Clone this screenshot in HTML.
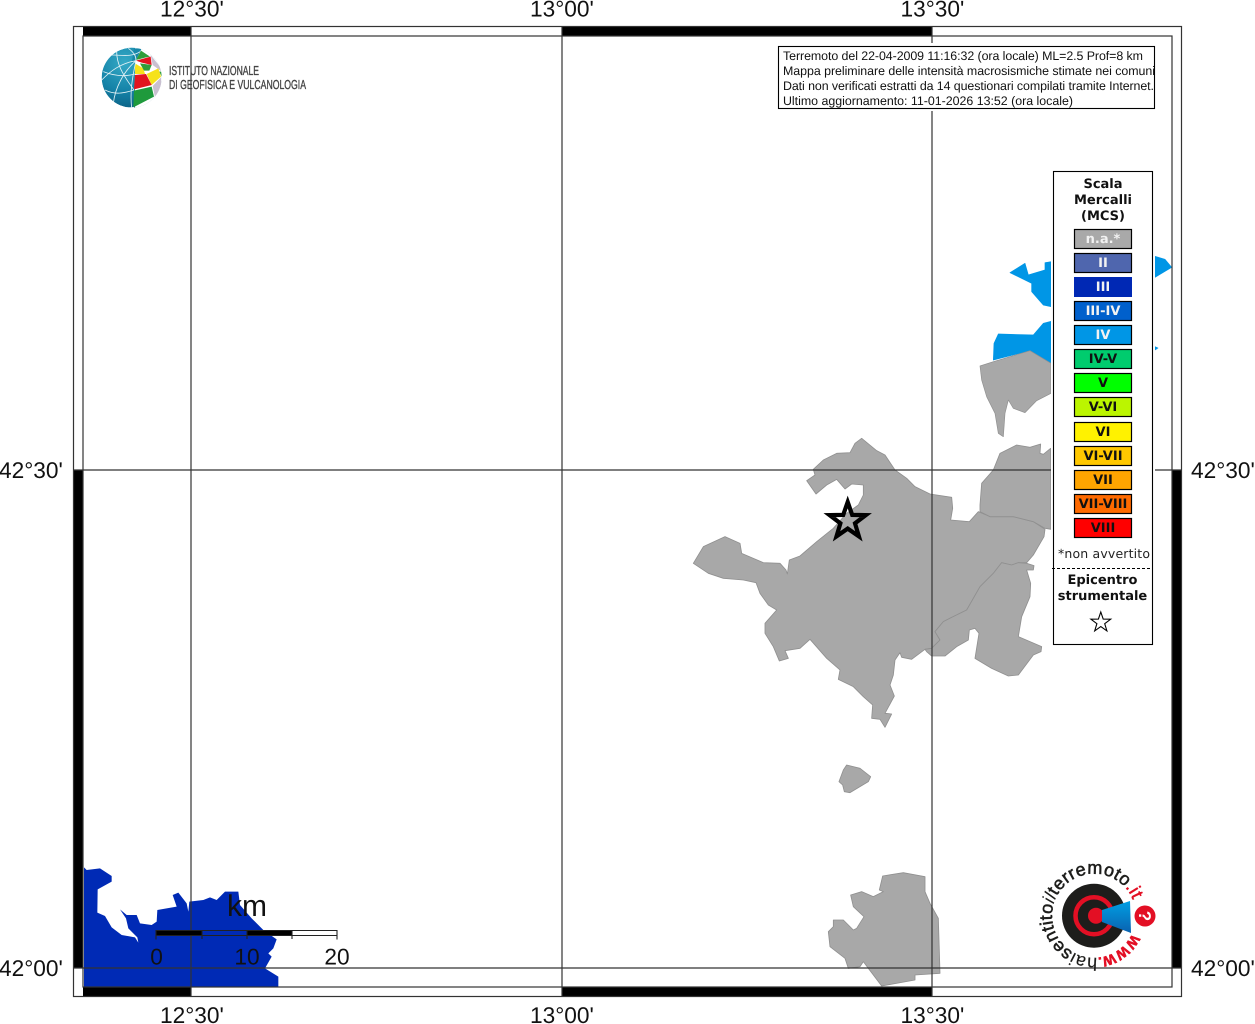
<!DOCTYPE html>
<html><head><meta charset="utf-8"><style>
html,body{margin:0;padding:0;background:#fff;width:1255px;height:1024px;overflow:hidden}
svg{display:block;filter:blur(.35px)}
text{text-rendering:geometricPrecision}
.ax{font:22.7px "Liberation Sans",sans-serif;fill:#111}
.h{font:12.4px "Liberation Sans",sans-serif;fill:#111}
.l{font:bold 13px "DejaVu Sans",sans-serif;text-anchor:middle}
.w{fill:#f2f2f2}.k{fill:#111}
</style></head><body>
<svg width="1255" height="1024" viewBox="0 0 1255 1024" xmlns="http://www.w3.org/2000/svg">
<defs>
<radialGradient id="gl" cx="38%" cy="25%" r="85%"><stop offset="0" stop-color="#35aac6"/><stop offset=".55" stop-color="#1583a8"/><stop offset="1" stop-color="#0a5a7e"/></radialGradient>
<linearGradient id="cone" x1="0" y1="0" x2="0" y2="1"><stop offset="0" stop-color="#009fe3"/><stop offset="1" stop-color="#0a62b0"/></linearGradient>
<clipPath id="gc"><circle cx="215" cy="233" r="90"/></clipPath>
<path id="arc" d="M1132.1 933.5 A42 42 0 1 1 1134.6 904.8"/>
</defs>

<!-- map -->
<g fill="#a8a8a8" stroke="#909090" stroke-width="1.2" stroke-linejoin="round" transform="translate(680,420) scale(.33333)">
<polygon stroke-width="2.5" points="545,55 590,92 615,105 645,150 680,175 705,200 750,222 815,232 818,265 812,300 868,305 895,275 930,290 1000,290 1060,305 1095,328 1092,350 1060,405 1040,428 1015,428 995,435 965,428 940,460 900,500 860,570 815,592 790,605 765,635 780,660 755,685 735,688 695,718 665,712 660,698 645,720 640,765 630,795 643,828 615,880 635,882 615,922 600,898 575,895 578,855 550,830 520,800 475,778 480,750 440,715 390,658 360,685 315,692 325,715 298,723 280,680 255,640 255,610 290,570 265,555 240,520 228,488 190,480 130,475 85,460 40,430 70,380 135,350 180,370 185,400 250,428 300,430 318,450 322,462 328,420 360,408 410,365 460,325 500,280 535,255 550,225 550,195 515,192 495,207 470,178 440,195 408,222 380,182 405,165 400,148 430,120 470,100 510,98 525,70"/>
<polygon stroke-width="2.5" points="965,428 995,435 1015,428 1040,430 1062,437 1060,450 1040,450 1052,490 1050,530 1025,590 1015,650 1085,680 1083,695 1060,705 1015,765 985,768 935,745 885,715 897,640 885,625 868,630 865,660 830,680 795,708 755,708 740,695 735,688 755,685 780,660 765,635 790,605 815,592 860,570 900,500 940,460"/>
<polygon stroke-width="2.5" points="900,255 905,190 940,150 960,100 1010,75 1050,82 1082,72 1080,100 1090,103 1112,85 1113,328 1095,325 1060,305 1000,290 930,290 900,275"/>
</g>
<g transform="translate(970,160) scale(.33333)" stroke-width="2" stroke-linejoin="round">
<g fill="#0096e6" stroke="#0096e6">
<polygon points="70,600 72,550 85,522 190,525 220,490 243,484 243,610 180,572"/>
<polygon points="120,338 165,310 175,345 225,330 225,308 243,305 243,440 220,435 185,395 185,370"/>
<polygon points="555,289 585,298 605,322 555,352"/>
<polygon points="555,560 564,564 555,570"/>
</g>
<polygon fill="#a8a8a8" stroke="#909090" points="30,618 70,605 180,572 243,610 243,700 200,722 165,758 130,745 115,720 105,760 100,830 85,820 75,760 50,710 35,660"/>
</g>
<g transform="translate(810,750) scale(.33333)" fill="#a8a8a8" stroke="#909090" stroke-width="2.5" stroke-linejoin="round">
<polygon points="110,45 150,55 182,80 175,95 120,128 103,125 98,105 87,95 100,60"/>
<polygon points="218,378 280,368 345,380 345,425 360,460 385,505 390,670 315,675 315,690 215,708 175,655 160,635 150,650 115,655 105,625 60,590 55,545 70,530 70,510 100,510 130,540 140,535 162,500 130,470 122,435 155,425 190,440 220,425 208,420"/>
</g>
<g transform="translate(60,850) scale(.33333)">
<polygon fill="#002ab5" points="72,52 80,60 120,55 155,78 155,95 113,118 112,188 135,198 155,232 185,255 225,262 235,278 232,262 205,235 198,205 180,178 200,195 230,195 240,220 275,225 290,215 292,180 350,170 338,135 355,128 380,160 385,185 388,155 430,150 450,142 470,150 495,125 535,125 540,165 575,205 610,240 650,268 640,295 625,310 635,320 615,355 655,380 655,410 72,410"/>
</g>

<!-- frame -->
<g fill="#000">
<rect x="83" y="26.5" width="108" height="9.5"/>
<rect x="562" y="26.5" width="370" height="9.5"/>
<rect x="83" y="987" width="108" height="9.5"/>
<rect x="562" y="987" width="370" height="9.5"/>
<rect x="73.5" y="470" width="10" height="498"/>
<rect x="1172" y="470" width="9.5" height="498"/>
</g>
<g stroke="#333" stroke-width="1.2" fill="none">
<rect x="73.5" y="26.5" width="1108" height="970"/>
<rect x="83" y="36" width="1089" height="951"/>
<path d="M191 27V996M562 27V996M932 27V996M74 470H1181M74 968H1181"/>
</g>

<!-- axis labels -->
<text class="ax" x="160" y="16.5">12°30'</text>
<text class="ax" x="530" y="16.5">13°00'</text>
<text class="ax" x="900.5" y="16.5">13°30'</text>
<text class="ax" x="160" y="1023">12°30'</text>
<text class="ax" x="530" y="1023">13°00'</text>
<text class="ax" x="900.5" y="1023">13°30'</text>
<text class="ax" x="-1" y="478">42°30'</text>
<text class="ax" x="-1" y="976">42°00'</text>
<text class="ax" x="1191" y="478">42°30'</text>
<text class="ax" x="1191" y="976">42°00'</text>

<!-- INGV logo -->
<g transform="translate(60,0) scale(.33333)">
<g clip-path="url(#gc)">
<circle cx="215" cy="233" r="90" fill="url(#gl)"/>
<rect x="225" y="140" width="90" height="190" fill="#fff"/>
<polygon fill="#1787a9" points="222,145 245,145 228,182 215,190"/>
<polygon fill="#2f9d3a" points="228,180 243,152 270,170 258,172"/>
<polygon fill="#e2141f" points="228,182 272,170 275,195 245,188"/>
<polygon fill="#c9c0d0" points="272,165 300,200 305,215 278,195"/>
<polygon fill="#f6e21a" points="225,190 250,205 255,222 225,222"/>
<polygon fill="#2f9d3a" points="240,190 275,195 268,212 252,212"/>
<polygon fill="#f6e21a" points="260,222 295,205 303,230 275,255"/>
<polygon fill="#e2141f" points="225,225 258,222 275,255 222,268"/>
<polygon fill="#c9c0d0" points="278,258 303,232 305,270 285,292"/>
<polygon fill="#1f9a3c" points="222,272 275,260 282,290 220,322"/>
<polygon fill="#2f9d3a" points="298,215 306,215 306,232"/>
<g fill="none" stroke="#e4f2f6" stroke-width="2.5">
<path d="M228 182C180 190 150 215 125 240M228 182C215 240 210 280 215 325M228 182C190 215 165 265 160 310M205 145C225 160 228 170 228 182M170 155C170 190 185 220 222 270"/>
<path d="M155 165C185 165 215 172 240 155M130 215C155 225 190 232 225 222M135 270C165 285 190 280 222 270M160 312C185 322 205 325 222 322"/>
</g>
</g>
</g>
<text x="169" y="75" textLength="90" lengthAdjust="spacingAndGlyphs" font-family="'Liberation Sans Narrow','Liberation Sans',sans-serif" font-size="13" fill="#444" stroke="#444" stroke-width=".35">ISTITUTO NAZIONALE</text>
<text x="169" y="89" textLength="137" lengthAdjust="spacingAndGlyphs" font-family="'Liberation Sans Narrow','Liberation Sans',sans-serif" font-size="13" fill="#444" stroke="#444" stroke-width=".35">DI GEOFISICA E VULCANOLOGIA</text>

<!-- header box -->
<rect x="775" y="43" width="383" height="68" fill="#fff"/>
<rect x="778.5" y="46.5" width="376" height="62" fill="#fff" stroke="#000" stroke-width="1.1"/>
<text class="h" x="783" y="60" textLength="360">Terremoto del 22-04-2009 11:16:32 (ora locale) ML=2.5 Prof=8 km</text>
<text class="h" x="783" y="75" textLength="372">Mappa preliminare delle intensità macrosismiche stimate nei comuni</text>
<text class="h" x="783" y="90" textLength="371">Dati non verificati estratti da 14 questionari compilati tramite Internet.</text>
<text class="h" x="783" y="105" textLength="290">Ultimo aggiornamento: 11-01-2026 13:52 (ora locale)</text>

<!-- epicenter -->
<polygon points="847.7,502 852.2,514.9 865.8,515.1 855,523.3 858.9,536.4 847.7,528.6 836.5,536.4 840.4,523.3 829.6,515.1 843.2,514.9" fill="none" stroke="#000" stroke-width="4.2" stroke-linejoin="miter"/>

<!-- legend -->
<rect x="1051" y="168" width="104" height="480" fill="#fff"/>
<rect x="1053.5" y="171.5" width="99" height="473" fill="#fff" stroke="#000" stroke-width="1.1"/>
<text class="l k" x="1103" y="188">Scala</text>
<text class="l k" x="1103" y="204">Mercalli</text>
<text class="l k" x="1103" y="220">(MCS)</text>
<g stroke="#000" stroke-width="1.2">
<rect x="1074.5" y="229.5" width="57" height="19" fill="#a9a9a9"/>
<rect x="1074.5" y="253.5" width="57" height="19" fill="#4f66ae"/>
<rect x="1074" y="277" width="58" height="20" fill="#0028b4" stroke="none"/>
<rect x="1074.5" y="301.5" width="57" height="19" fill="#0060cc"/>
<rect x="1074.5" y="325.5" width="57" height="19" fill="#0096e6"/>
<rect x="1074.5" y="349.5" width="57" height="19" fill="#00cc6e"/>
<rect x="1074.5" y="373.5" width="57" height="19" fill="#00ff00"/>
<rect x="1074.5" y="397.5" width="57" height="19" fill="#bbf500"/>
<rect x="1074.5" y="422.5" width="57" height="19" fill="#fff200"/>
<rect x="1074.5" y="446.5" width="57" height="19" fill="#ffc800"/>
<rect x="1074.5" y="470.5" width="57" height="19" fill="#ffa500"/>
<rect x="1074.5" y="494.5" width="57" height="19" fill="#ff6a00"/>
<rect x="1074.5" y="518.5" width="57" height="19" fill="#ff0000"/>
</g>
<text class="l w" x="1103" y="243">n.a.*</text>
<text class="l w" x="1103" y="267">II</text>
<text class="l w" x="1103" y="291">III</text>
<text class="l w" x="1103" y="315">III-IV</text>
<text class="l w" x="1103" y="339">IV</text>
<text class="l k" x="1103" y="363">IV-V</text>
<text class="l k" x="1103" y="387">V</text>
<text class="l k" x="1103" y="411">V-VI</text>
<text class="l k" x="1103" y="436">VI</text>
<text class="l k" x="1103" y="460">VI-VII</text>
<text class="l k" x="1103" y="484">VII</text>
<text class="l k" x="1103" y="508">VII-VIII</text>
<text class="l k" x="1103" y="532">VIII</text>
<text x="1058" y="558" font-family="'DejaVu Sans',sans-serif" font-size="12.5" fill="#222" textLength="92">*non avvertito</text>
<path d="M1052 568.5H1151" stroke="#000" stroke-width="1" stroke-dasharray="3 2"/>
<text class="l k" x="1102.5" y="584">Epicentro</text>
<text class="l k" x="1102.5" y="600">strumentale</text>
<polygon points="1100.8,612 1103.2,619.1 1110.7,619.2 1104.7,623.7 1106.9,630.9 1100.8,626.6 1094.7,630.9 1096.9,623.7 1090.9,619.2 1098.4,619.1" fill="none" stroke="#000" stroke-width="1.1"/>

<!-- scale bar -->
<g>
<rect x="156" y="930" width="46" height="6" fill="#000"/>
<rect x="247" y="930" width="45" height="6" fill="#000"/>
<path d="M156 930.5H337M156 935.5H337M156 930V939.5M202 930V939M247 930V939M292 930V939M337 930V939.5" stroke="#222" stroke-width="1.1" fill="none"/>
<text x="247" y="916" font-family="'Liberation Sans',sans-serif" font-size="30" text-anchor="middle" fill="#111">km</text>
<text class="ax" x="156.5" y="964.5" text-anchor="middle">0</text>
<text class="ax" x="247" y="964.5" text-anchor="middle">10</text>
<text class="ax" x="337" y="964.5" text-anchor="middle">20</text>
</g>

<!-- haisentito logo -->
<circle cx="1094" cy="915.7" r="32" fill="#1d1d1b"/>
<circle cx="1094" cy="915.7" r="18.5" fill="none" stroke="#e30f24" stroke-width="4.5"/>
<circle cx="1096" cy="915.7" r="8" fill="#e30f24"/>
<polygon points="1102,910 1130,901 1131,933 1102,922" fill="url(#cone)"/>
<circle cx="1145" cy="916" r="10.5" fill="#e30f24"/>
<text x="1145" y="922" font-family="'Liberation Sans',sans-serif" font-size="17" font-weight="bold" fill="#fff" text-anchor="middle" transform="rotate(90 1145 916)">?</text>
<text font-family="'Liberation Sans',sans-serif" font-size="18" fill="#1d1d1b" stroke="#1d1d1b" stroke-width=".55" letter-spacing=".35"><textPath href="#arc"><tspan fill="#e30f24" stroke="#e30f24" font-size="14" font-weight="bold">WWW.</tspan><tspan stroke-width=".15">hai</tspan>sentito<tspan stroke="none" font-style="italic">il</tspan>terremoto<tspan fill="#e30f24" stroke="#e30f24">.it</tspan></textPath></text>
</svg>
</body></html>
